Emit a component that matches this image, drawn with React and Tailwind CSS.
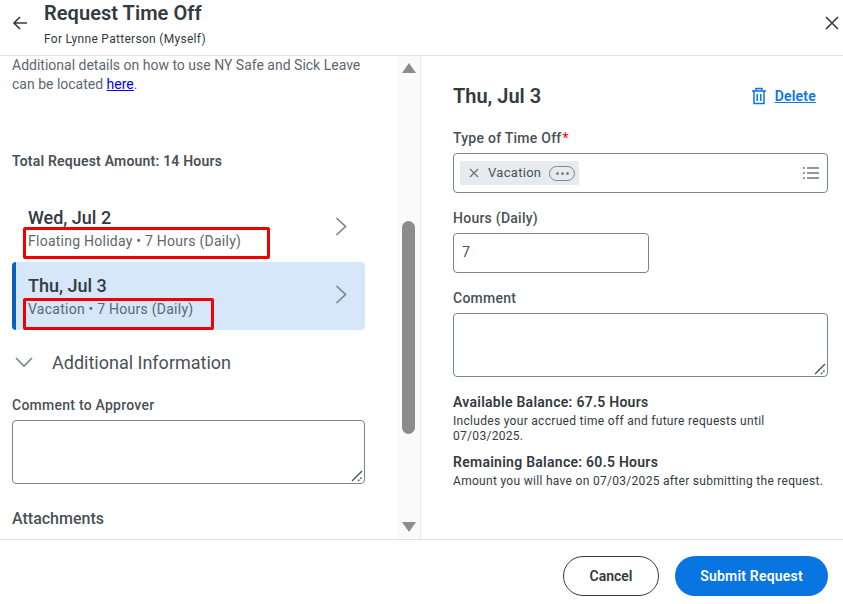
const font = { fontFamily: 'Roboto, sans-serif' }

function Resize() {
  return (
    <svg width="12" height="12" viewBox="0 0 12 12" className="absolute right-[1px] bottom-[1px]" fill="none" stroke="#444b53" strokeWidth="1.2">
      <path d="M1 11 11 1" />
      <path d="M7 11 11 7" strokeDasharray="2 1" />
    </svg>
  )
}

function DayRow({ title, sub, selected, boxClass }) {
  return (
    <div className={`relative h-[68px] pr-[18px] flex items-center justify-between rounded-[4px] ${selected ? 'bg-[#d5e7f9] border-l-4 border-[#0b5fc0] pl-3' : 'pl-4'}`}>
      <div>
        <div className="text-[18px] leading-[24px] font-medium text-[#333a42]">{title}</div>
        <div className="mt-[1px] text-[14px] leading-[20px] text-[#5e6670] tracking-[0.25px]">{sub}</div>
      </div>
      <svg width="12" height="19" viewBox="0 0 12 19" fill="none" stroke="#7b858f" strokeWidth="1.7" className="mt-[-3px]">
        <path d="M1.5 1l9 8.5-9 8.5" />
      </svg>
      <div className={`absolute border-[3px] border-[#f00000] rounded-[2px] ${boxClass}`} />
    </div>
  )
}

function FieldLabel({ children }) {
  return <div className="text-[14px] leading-[20px] font-medium text-[#4a5158] tracking-[0.25px]">{children}</div>
}

export default function App() {
  return (
    <div className="w-[843px] h-[604px] bg-white flex flex-col overflow-hidden" style={font}>
      {/* Header */}
      <div className="h-[56px] shrink-0 border-b border-[#e0e0e0] flex items-start justify-between">
        <div className="flex">
          <svg width="18" height="18" viewBox="0 0 18 18" fill="none" stroke="#333a42" strokeWidth="1.6" className="ml-[11px] mt-[14px]">
            <path d="M16 9H3M9 3 3 9l6 6" />
          </svg>
          <div className="ml-[15px]">
            <div className="text-[20px] leading-[26px] font-semibold text-[#333a42] tracking-[0.05px]">Request Time Off</div>
            <div className="text-[12px] leading-[16px] mt-[5px] text-[#333a42] tracking-[0.3px]">For Lynne Patterson (Myself)</div>
          </div>
        </div>
        <svg width="16" height="16" viewBox="0 0 16 16" fill="none" stroke="#333a42" strokeWidth="1.6" className="mr-[3px] mt-[15px]">
          <path d="M2 2l12 12M14 2 2 14" />
        </svg>
      </div>

      {/* Body */}
      <div className="flex-1 min-h-0 flex">
        {/* Left pane */}
        <div className="w-[421px] shrink-0 border-r border-[#e8e8e8] flex">
          <div className="w-[397px] shrink-0 overflow-hidden pl-3 pr-8">
            <div className="text-[14px] leading-[19px] text-[#5e6670] whitespace-nowrap">
              Additional details on how to use NY Safe and Sick Leave<br />
              can be located <span className="text-[#0000ee] underline">here</span>.
            </div>
            <div className="mt-[58px] text-[14px] leading-[18px] font-semibold text-[#4a5158] tracking-[0.2px]">Total Request Amount: 14 Hours</div>
            <div className="mt-[24px]">
              <DayRow title="Wed, Jul 2" sub="Floating Holiday • 7 Hours (Daily)" boxClass="left-[11px] top-[33px] w-[247px] h-[32px]" />
              <DayRow title="Thu, Jul 3" sub="Vacation • 7 Hours (Daily)" selected boxClass="left-[7px] top-[36px] w-[191px] h-[32px]" />
            </div>
            <div className="mt-[20px] flex items-center h-[24px]">
              <svg width="18" height="12" viewBox="0 0 18 12" fill="none" stroke="#7b858f" strokeWidth="1.7" className="ml-[3px]">
                <path d="M1 2l8 8 8-8" />
              </svg>
              <span className="ml-[19px] text-[18px] text-[#4a5158]">Additional Information</span>
            </div>
            <div className="mt-[21px]"><FieldLabel>Comment to Approver</FieldLabel></div>
            <div className="relative mt-[5px] h-[64px] border border-[#7b858f] rounded-[4px]"><Resize /></div>
            <div className="mt-[25px] text-[16px] leading-[20px] font-medium text-[#4a5158]">Attachments</div>
          </div>
          {/* Scrollbar */}
          <div className="flex-1 bg-[#fafafa] pl-[5px] pt-[7px]">
            <div className="w-0 h-0 border-x-[7px] border-x-transparent border-b-[10px] border-b-[#8c8c8c]" />
            <div className="w-[13px] h-[213px] rounded-[7px] bg-[#8c8c8c] mt-[148px]" />
            <div className="mt-[88px] w-0 h-0 border-x-[7px] border-x-transparent border-t-[10px] border-t-[#8c8c8c]" />
          </div>
        </div>

        {/* Right pane */}
        <div className="flex-1 min-w-0 pl-[32px] pr-[15px]">
          <div className="mt-[27px] flex items-center justify-between pr-[12px] h-[26px]">
            <div className="text-[20px] font-semibold text-[#333a42]">Thu, Jul 3</div>
            <div className="flex items-center gap-[8px] text-[#0875e1]">
              <svg width="16" height="18" viewBox="0 0 16 18" fill="none" stroke="#0875e1" strokeWidth="1.5">
                <path d="M1 4h14M5 4V1.5h6V4M3 4v12.5h10V4M6.2 7v7M9.8 7v7" />
              </svg>
              <span className="text-[14px] font-semibold underline tracking-[0.2px]">Delete</span>
            </div>
          </div>
          <div className="mt-[19px] flex">
            <FieldLabel>Type of Time Off</FieldLabel>
            <span className="ml-[1px] text-[14px] leading-[20px] text-[#f00000]">*</span>
          </div>
          <div className="mt-[5px] h-[40px] border border-[#7b858f] rounded-[4px] flex items-center justify-between pl-[6px] pr-[8px]">
            <div className="h-[24px] bg-[#e8ebed] rounded-[2px] flex items-center pl-[9px] pr-[4px]">
              <svg width="10" height="10" viewBox="0 0 10 10" fill="none" stroke="#6b747d" strokeWidth="1.3">
                <path d="M1 1l8 8M9 1 1 9" />
              </svg>
              <span className="ml-[9px] text-[13px] text-[#4a5158] tracking-[0.3px]">Vacation</span>
              <div className="ml-[8px] w-[26px] h-[15px] border border-[#7b858f] rounded-full flex items-center justify-center gap-[2px]">
                <div className="w-[3px] h-[3px] rounded-full bg-[#7b858f]" />
                <div className="w-[3px] h-[3px] rounded-full bg-[#7b858f]" />
                <div className="w-[3px] h-[3px] rounded-full bg-[#7b858f]" />
              </div>
            </div>
            <svg width="16" height="14" viewBox="0 0 16 14" fill="none" stroke="#6b747d" strokeWidth="1.5">
              <path d="M0 2h2M4 2h12M0 7h2M4 7h12M0 12h2M4 12h12" />
            </svg>
          </div>
          <div className="mt-[15px]"><FieldLabel>Hours (Daily)</FieldLabel></div>
          <div className="mt-[5px] w-[196px] h-[40px] border border-[#7b858f] rounded-[4px] flex items-center pl-[8px] pb-[2px] text-[14px] text-[#4a5158]">7</div>
          <div className="mt-[15px]"><FieldLabel>Comment</FieldLabel></div>
          <div className="relative mt-[5px] h-[64px] border border-[#7b858f] rounded-[4px]"><Resize /></div>
          <div className="mt-[15px] text-[14px] leading-[20px] font-semibold text-[#333a42] tracking-[0.27px]">Available Balance: 67.5 Hours</div>
          <div className="text-[12px] leading-[15px] mt-[2px] text-[#333a42] tracking-[0.3px]">Includes your accrued time off and future requests until<br />07/03/2025.</div>
          <div className="mt-[8px] text-[14px] leading-[20px] font-semibold text-[#333a42] tracking-[0.27px]">Remaining Balance: 60.5 Hours</div>
          <div className="text-[12px] leading-[15px] mt-[2px] text-[#333a42] tracking-[0.3px] whitespace-nowrap">Amount you will have on 07/03/2025 after submitting the request.</div>
        </div>
      </div>

      {/* Footer */}
      <div className="h-[65px] shrink-0 border-t border-[#e0e0e0] flex justify-end items-start gap-4 pt-4 pr-[15px]">
        <div className="w-[96px] h-[40px] rounded-full border border-[#333a42] flex items-center justify-center text-[14px] font-semibold text-[#333a42]">Cancel</div>
        <div className="w-[153px] h-[40px] rounded-full bg-[#0875e1] flex items-center justify-center text-[14px] font-semibold text-white tracking-[0.2px]">Submit Request</div>
      </div>
    </div>
  )
}
